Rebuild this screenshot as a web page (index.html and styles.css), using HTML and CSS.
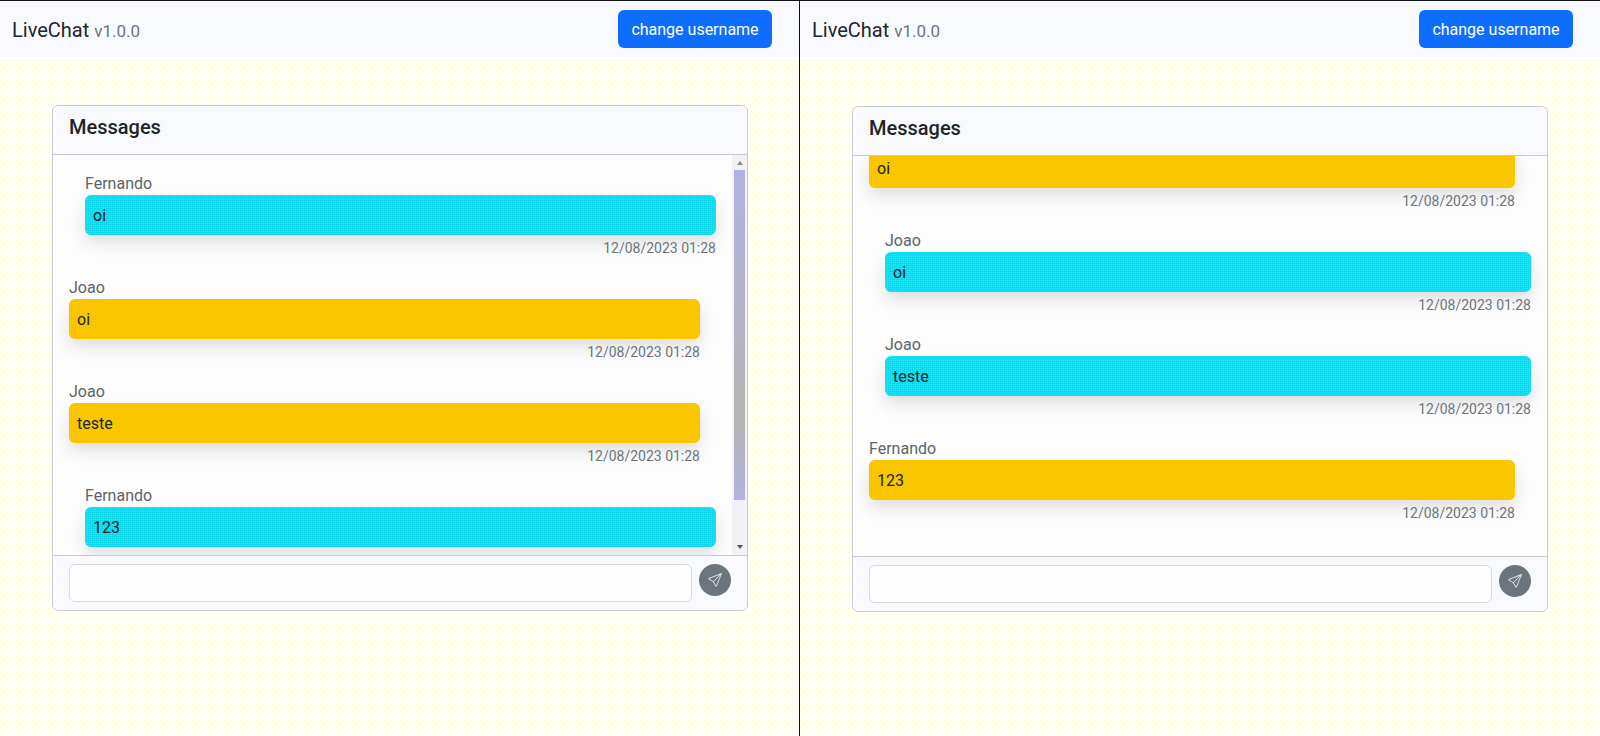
FILE: index.html
```html
<!DOCTYPE html>
<html lang="en">
<head>
    <meta charset="UTF-8">
    <title>LiveChat</title>
    <link rel="stylesheet" href="styles.css">
</head>
<body>
    <div class="screens">
        <section class="screen">
            <nav class="topbar">
                <span class="brand">LiveChat <small>v1.0.0</small></span>
                <button class="btn-username">change username</button>
            </nav>
            <div class="card">
                <div class="card-header">Messages</div>
                <div class="card-body">
                    <div class="messages">
                        <div class="msg other">
                            <div class="msg-name">Fernando</div>
                            <div class="msg-text">oi</div>
                            <div class="msg-date">12/08/2023 01:28</div>
                        </div>
                        <div class="msg mine">
                            <div class="msg-name">Joao</div>
                            <div class="msg-text">oi</div>
                            <div class="msg-date">12/08/2023 01:28</div>
                        </div>
                        <div class="msg mine">
                            <div class="msg-name">Joao</div>
                            <div class="msg-text">teste</div>
                            <div class="msg-date">12/08/2023 01:28</div>
                        </div>
                        <div class="msg other">
                            <div class="msg-name">Fernando</div>
                            <div class="msg-text">123</div>
                        </div>
                    </div>
                    <div class="scrollbar">
                        <span class="arrow-up"></span>
                        <span class="thumb"></span>
                        <span class="arrow-down"></span>
                    </div>
                </div>
                <div class="card-footer">
                    <input class="msg-input" type="text">
                    <button class="btn-send" aria-label="send">
                        <svg width="14" height="14" viewBox="0 0 16 16" fill="currentColor"><path d="M15.854.146a.5.5 0 0 1 .11.54l-5.819 14.547a.75.75 0 0 1-1.329.124l-3.178-4.995L.643 7.184a.75.75 0 0 1 .124-1.33L15.314.037a.5.5 0 0 1 .54.11ZM6.636 10.07l2.761 4.338L14.13 2.576 6.636 10.07Zm6.787-8.201L1.591 6.602l4.339 2.76 7.494-7.493Z"/></svg>
                    </button>
                </div>
            </div>
        </section>
        <section class="screen second">
            <nav class="topbar">
                <span class="brand">LiveChat <small>v1.0.0</small></span>
                <button class="btn-username">change username</button>
            </nav>
            <div class="card">
                <div class="card-header">Messages</div>
                <div class="card-body">
                    <div class="messages" id="scrolled">
                        <div class="msg mine">
                            <div class="msg-text">oi</div>
                            <div class="msg-date">12/08/2023 01:28</div>
                        </div>
                        <div class="msg other">
                            <div class="msg-name">Joao</div>
                            <div class="msg-text">oi</div>
                            <div class="msg-date">12/08/2023 01:28</div>
                        </div>
                        <div class="msg other">
                            <div class="msg-name">Joao</div>
                            <div class="msg-text">teste</div>
                            <div class="msg-date">12/08/2023 01:28</div>
                        </div>
                        <div class="msg mine">
                            <div class="msg-name">Fernando</div>
                            <div class="msg-text">123</div>
                            <div class="msg-date">12/08/2023 01:28</div>
                        </div>
                    </div>
                </div>
                <div class="card-footer">
                    <input class="msg-input" type="text">
                    <button class="btn-send" aria-label="send">
                        <svg width="14" height="14" viewBox="0 0 16 16" fill="currentColor"><path d="M15.854.146a.5.5 0 0 1 .11.54l-5.819 14.547a.75.75 0 0 1-1.329.124l-3.178-4.995L.643 7.184a.75.75 0 0 1 .124-1.33L15.314.037a.5.5 0 0 1 .54.11ZM6.636 10.07l2.761 4.338L14.13 2.576 6.636 10.07Zm6.787-8.201L1.591 6.602l4.339 2.76 7.494-7.493Z"/></svg>
                    </button>
                </div>
            </div>
        </section>
    </div>
    <script src="script.js"></script>
</body>
</html>
```

FILE: styles.css
```css
body {
    margin: 0;
    font-family: Roboto, sans-serif;
    font-size: 16px;
    color: #212529;
    background-color: #fffffd;
    background-image:
        conic-gradient(from 0deg at 1px 1px, transparent 75%, #fff89a 0),
        conic-gradient(from 0deg at 1px 1px, transparent 75%, #fff89a 0);
    background-size: 8px 8px;
    background-position: 0 0, 4px 4px;
    border-top: 1px solid #111;
    height: 735px;
    overflow: hidden;
}
.screens {
    display: flex;
}
.screen {
    width: 799px;
    height: 735px;
    border-right: 1px solid #111;
}
.second {
    width: 800px;
    border-right: none;
}
.topbar {
    height: 56px;
    padding: 0 27px 0 12px;
    display: flex;
    align-items: center;
    justify-content: space-between;
    background-color: #f7f9ff;
    background-image: conic-gradient(from 0deg at 1px 1px, transparent 75%, #fffde6 0);
    background-size: 2px 2px;
}
.brand {
    font-size: 20px;
    padding-top: 2px;
}
.brand small {
    font-size: 17px;
    color: #6c757d;
}
.btn-username {
    height: 38px;
    width: 154px;
    border: none;
    border-radius: 6px;
    background-color: #0d6efd;
    color: #fff;
    font-family: inherit;
    font-size: 16px;
}
.card {
    width: 694px;
    margin: 48px 0 0 52px;
    border: 1px solid #c9cad0;
    border-radius: 6px;
    background-color: #fdfdfe;
}
.second .card {
    margin-top: 49px;
}
.card-header {
    height: 49px;
    line-height: 43px;
    padding-left: 16px;
    font-size: 20px;
    font-weight: 500;
    background-color: #f7f9fc;
    background-image: conic-gradient(from 0deg at 1px 1px, transparent 75%, #fffde6 0);
    background-size: 2px 2px;
    border-bottom: 1px solid #c9cad0;
    border-radius: 6px 6px 0 0;
    box-sizing: border-box;
}
.card-body {
    height: 400px;
    display: flex;
}
.messages {
    flex: 1;
    overflow: hidden;
    box-sizing: border-box;
    padding: 16px;
}
.msg {
    margin-right: 16px;
    padding-bottom: 16px;
}
.other {
    margin: 0 0 0 16px;
}
.msg-name {
    height: 24px;
    line-height: 26px;
    color: #5c636a;
}
.msg-text {
    height: 40px;
    line-height: 42px;
    padding-left: 8px;
    border-radius: 6px;
    box-shadow: 0 8px 16px rgba(0, 0, 0, 0.12);
}
.mine .msg-text {
    background-color: #fcc800;
    background-image: conic-gradient(from 0deg at 1px 1px, transparent 75%, #f6bd00 0);
    background-size: 2px 2px;
}
.other .msg-text {
    background-color: #0dd8ec;
    background-image: conic-gradient(from 0deg at 1px 1px, transparent 75%, #35e4ee 0);
    background-size: 2px 2px;
}
.msg-date {
    text-align: right;
    font-size: 14px;
    line-height: 21px;
    color: #6c757d;
    margin-top: 3px;
}
.scrollbar {
    width: 15px;
    display: flex;
    flex-direction: column;
    align-items: center;
    background-color: #f2f2f6;
}
.arrow-up,
.arrow-down {
    width: 0;
    height: 0;
    border-left: 3.5px solid transparent;
    border-right: 3.5px solid transparent;
}
.arrow-up {
    margin: 6px 0 5px;
    border-bottom: 4px solid #8a8a8a;
}
.arrow-down {
    margin: auto 0 6px;
    border-top: 4px solid #505050;
}
.thumb {
    width: 11px;
    height: 330px;
    background: linear-gradient(#b2b2e2, #b4b4c0 55%, #b4b4b0 75%, #b2b2e2);
}
.card-footer {
    height: 55px;
    display: flex;
    align-items: flex-start;
    gap: 7px;
    padding: 8px 16px 0 16px;
    box-sizing: border-box;
    background-color: #f7f9fc;
    background-image: conic-gradient(from 0deg at 1px 1px, transparent 75%, #fffde6 0);
    background-size: 2px 2px;
    border-top: 1px solid #c9cad0;
    border-radius: 0 0 6px 6px;
}
.msg-input {
    flex: 1;
    height: 38px;
    box-sizing: border-box;
    border: 1px solid #d9dade;
    border-radius: 6px;
    background-color: #fefefe;
}
.btn-send {
    width: 32px;
    height: 32px;
    padding: 0;
    border: none;
    border-radius: 50%;
    background-color: #6c757d;
    color: #dfe2e4;
    display: flex;
    align-items: center;
    justify-content: center;
}
```

FILE: script.js
```js
const box = document.getElementById('scrolled');
box.scrollTop = box.scrollHeight;
```
